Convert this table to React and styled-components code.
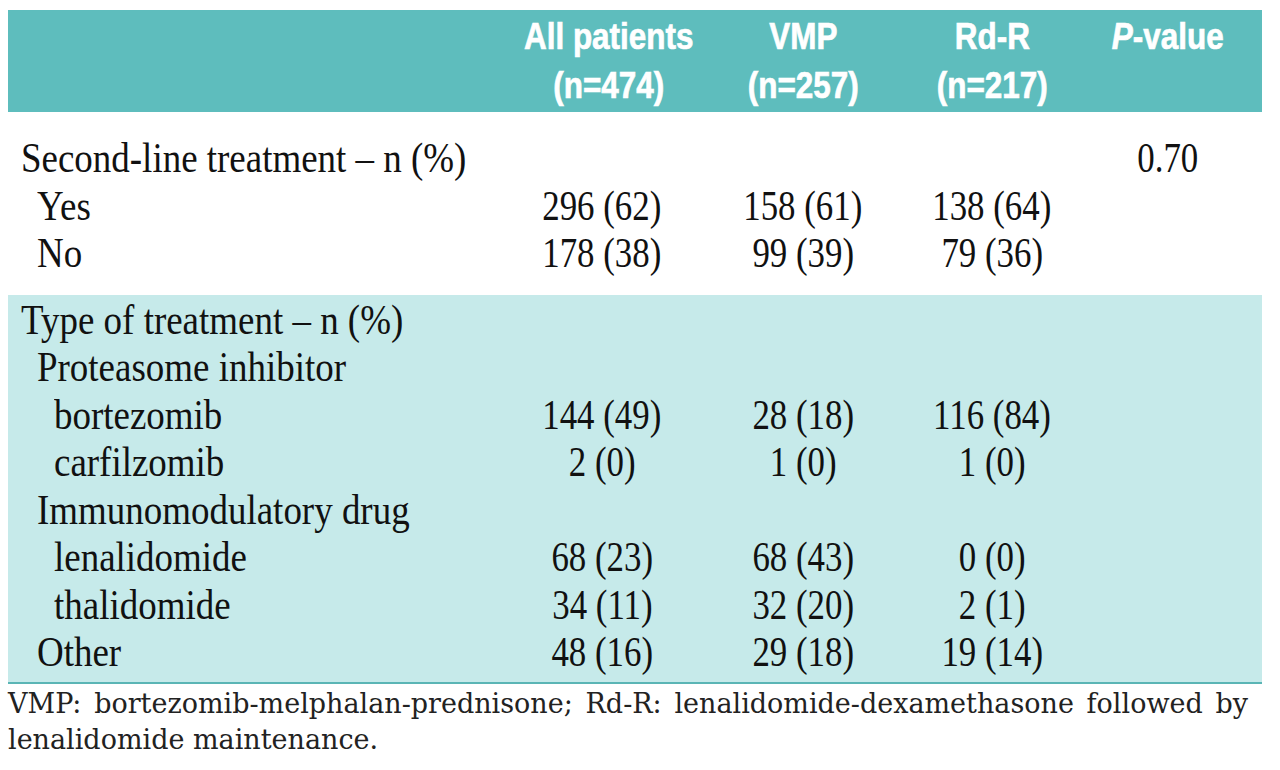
import React from "react";
import styled, { createGlobalStyle } from "styled-components";

const Global = createGlobalStyle`
  html, body { margin: 0; padding: 0; background: #ffffff; overflow: hidden; }
  #root { width: 1280px; height: 770px; }
`;

const COLS = "501px 186px 216px 162px 190px";

const Page = styled.div`
  padding: 10px 18px 0 8px;
  width: 1254px;
`;

const Table = styled.div`
  display: flex;
  flex-direction: column;
  width: 1254px;
`;

const HeaderBand = styled.div`
  display: grid;
  grid-template-columns: ${COLS};
  background: #5ebdbd;
  padding: 2px 0 2px;
`;

const HeadCell = styled.div`
  text-align: center;
  white-space: nowrap;
  min-width: 0;
`;

const HeadText = styled.span`
  display: inline-block;
  font-family: "Liberation Sans", Arial, sans-serif;
  font-weight: 700;
  font-size: 37px;
  line-height: 49px;
  color: #ffffff;
  -webkit-text-stroke: 0.7px #ffffff;
  transform: scaleX(0.85);
  transform-origin: center;
  span { display: block; }
  i { font-style: italic; }
`;

const Section = styled.div`
  display: flex;
  flex-direction: column;
  background: ${(p) => (p.$tinted ? "#c6eaea" : "#ffffff")};
  padding: ${(p) => (p.$tinted ? "2px 0 5px" : "23px 0 17px")};
  border-bottom: ${(p) => (p.$tinted ? "2px solid #5ab5b5" : "none")};
`;

const Row = styled.div`
  display: grid;
  grid-template-columns: ${COLS};
  height: 47.5px;
  font-family: "Liberation Serif", "Times New Roman", serif;
  font-size: 42px;
  line-height: 47.5px;
  color: #111111;
`;

const LabelCell = styled.div`
  white-space: nowrap;
  min-width: 0;
  padding-left: ${(p) => [13, 29, 46][p.$level]}px;
`;

const LabelText = styled.span`
  display: inline-block;
  transform: scaleX(0.88);
  transform-origin: left center;
`;

const ValueCell = styled.div`
  text-align: center;
  white-space: nowrap;
  min-width: 0;
`;

const ValueText = styled.span`
  display: inline-block;
  transform: scaleX(0.83);
  transform-origin: center;
`;

const Footnote = styled.p`
  margin: 2px 14px 0 0;
  font-family: "DejaVu Serif", "Liberation Serif", serif;
  font-size: 27px;
  line-height: 36px;
  color: #222222;
  text-align: justify;
  text-align-last: left;
`;

const upper = [
  { label: "Second-line treatment \u2013 n (%)", level: 0, vals: ["", "", "", "0.70"] },
  { label: "Yes", level: 1, vals: ["296 (62)", "158 (61)", "138 (64)", ""] },
  { label: "No", level: 1, vals: ["178 (38)", "99 (39)", "79 (36)", ""] },
];

const lower = [
  { label: "Type of treatment \u2013 n (%)", level: 0, vals: ["", "", "", ""] },
  { label: "Proteasome inhibitor", level: 1, vals: ["", "", "", ""] },
  { label: "bortezomib", level: 2, vals: ["144 (49)", "28 (18)", "116 (84)", ""] },
  { label: "carfilzomib", level: 2, vals: ["2 (0)", "1 (0)", "1 (0)", ""] },
  { label: "Immunomodulatory drug", level: 1, vals: ["", "", "", ""] },
  { label: "lenalidomide", level: 2, vals: ["68 (23)", "68 (43)", "0 (0)", ""] },
  { label: "thalidomide", level: 2, vals: ["34 (11)", "32 (20)", "2 (1)", ""] },
  { label: "Other", level: 1, vals: ["48 (16)", "29 (18)", "19 (14)", ""] },
];

function DataRow({ row }) {
  return (
    <Row>
      <LabelCell $level={row.level}>
        <LabelText>{row.label}</LabelText>
      </LabelCell>
      {row.vals.map((v, i) => (
        <ValueCell key={i}>{v && <ValueText>{v}</ValueText>}</ValueCell>
      ))}
    </Row>
  );
}

export default function App() {
  return (
    <>
      <Global />
      <Page>
        <Table>
          <HeaderBand>
            <HeadCell />
            <HeadCell>
              <HeadText>
                <span>All patients</span>
                <span>(n=474)</span>
              </HeadText>
            </HeadCell>
            <HeadCell>
              <HeadText>
                <span>VMP</span>
                <span>(n=257)</span>
              </HeadText>
            </HeadCell>
            <HeadCell>
              <HeadText>
                <span>Rd-R</span>
                <span>(n=217)</span>
              </HeadText>
            </HeadCell>
            <HeadCell>
              <HeadText>
                <span>
                  <i>P</i>-value
                </span>
                <span>&nbsp;</span>
              </HeadText>
            </HeadCell>
          </HeaderBand>
          <Section>
            {upper.map((r) => (
              <DataRow key={r.label} row={r} />
            ))}
          </Section>
          <Section $tinted>
            {lower.map((r) => (
              <DataRow key={r.label} row={r} />
            ))}
          </Section>
        </Table>
        <Footnote>
          VMP: bortezomib-melphalan-prednisone; Rd-R: lenalidomide-dexamethasone followed by
          lenalidomide maintenance.
        </Footnote>
      </Page>
    </>
  );
}
